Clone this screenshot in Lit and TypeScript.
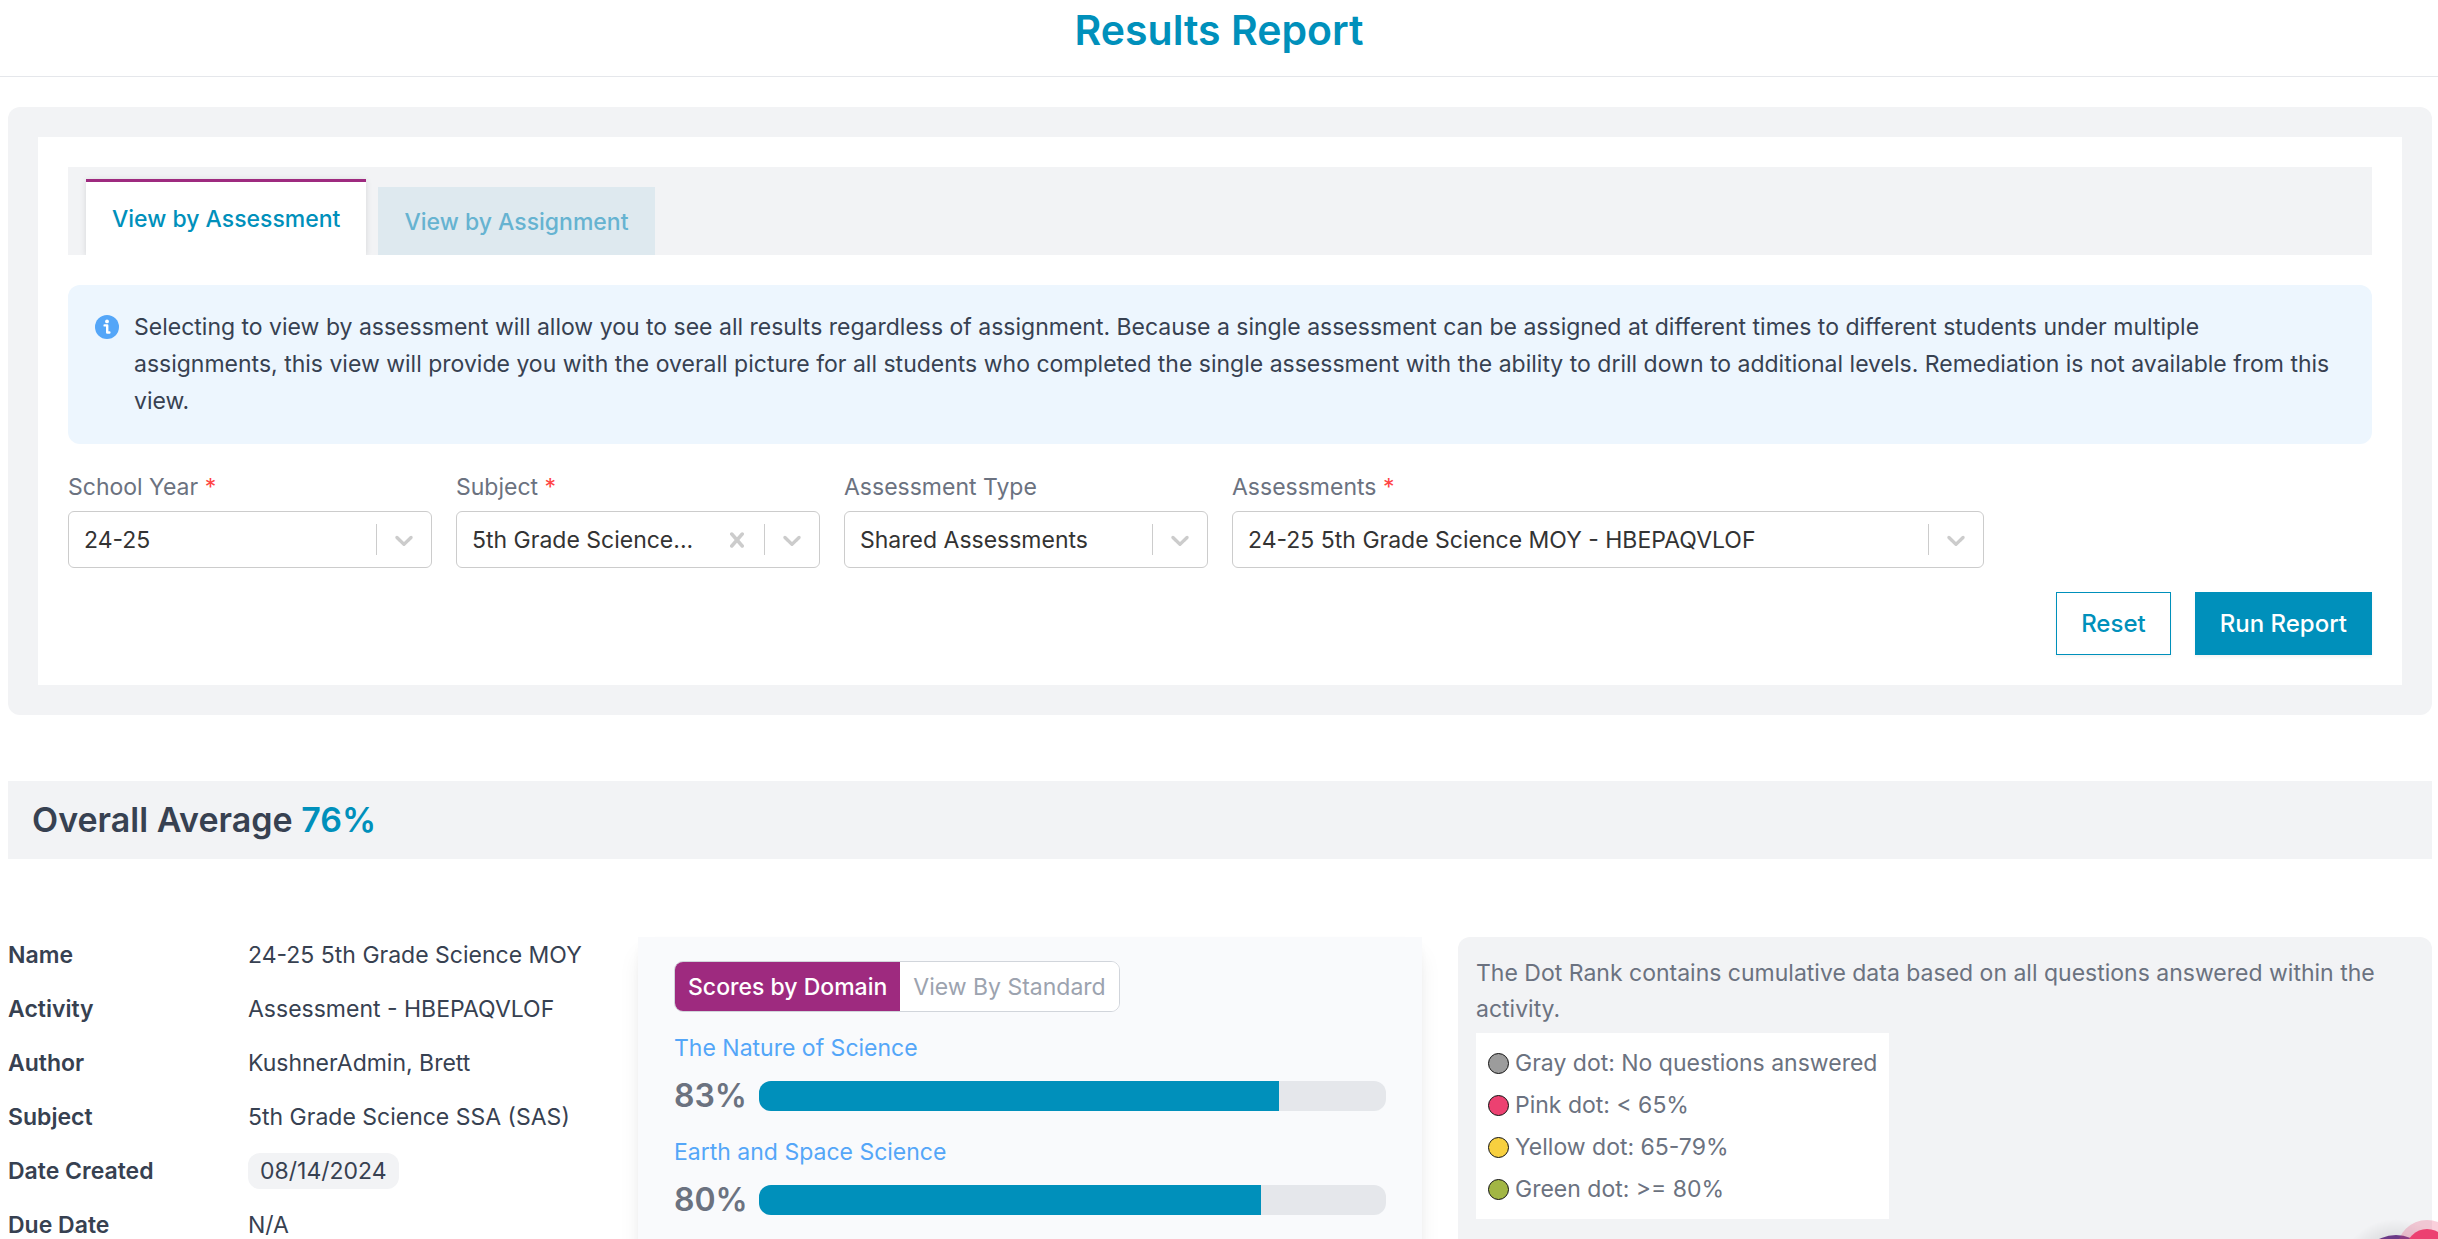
import { LitElement, html, css, svg, nothing } from "lit";
import { customElement, property, state } from "lit/decorators.js";
import { classMap } from "lit/directives/class-map.js";
import { styleMap } from "lit/directives/style-map.js";

const chevron = svg`<svg class="icon" viewBox="0 0 20 20" aria-hidden="true"><path d="M4.516 7.548c0.436-0.446 1.043-0.481 1.576 0l3.908 3.747 3.908-3.747c0.533-0.481 1.141-0.446 1.574 0 0.436 0.445 0.408 1.197 0 1.615-0.406 0.418-4.695 4.502-4.695 4.502-0.217 0.223-0.502 0.335-0.787 0.335s-0.57-0.112-0.789-0.335c0 0-4.287-4.084-4.695-4.502s-0.436-1.17 0-1.615z"/></svg>`;

const cross = svg`<svg class="icon" viewBox="0 0 20 20" aria-hidden="true"><path d="M14.348 14.849c-0.469 0.469-1.229 0.469-1.697 0l-2.651-3.030-2.651 3.029c-0.469 0.469-1.229 0.469-1.697 0-0.469-0.469-0.469-1.229 0-1.697l2.758-3.15-2.759-3.152c-0.469-0.469-0.469-1.228 0-1.697s1.228-0.469 1.697 0l2.652 3.031 2.651-3.031c0.469-0.469 1.228-0.469 1.697 0s0.469 1.229 0 1.697l-2.758 3.152 2.758 3.15c0.469 0.469 0.469 1.229 0 1.698z"/></svg>`;

@customElement("select-field")
export class SelectField extends LitElement {
  static styles = css`
    :host { display: block; min-width: 0; }
    .label { display: block; line-height: 38px; margin-bottom: 5px; color: #6b7280; }
    .required { color: #ff4444; }
    .control {
      display: grid;
      grid-template-columns: minmax(0, 1fr) auto;
      align-items: center;
      height: 57px;
      box-sizing: border-box;
      border: 1px solid #cccccc;
      border-radius: 6px;
      background: #ffffff;
    }
    .select {
      grid-area: 1 / 1 / 2 / 3;
      width: 100%;
      height: 100%;
      padding: 0 72px 0 15px;
      border: 0;
      background: transparent;
      appearance: none;
      font: inherit;
      color: #333333;
      border-radius: 6px;
    }
    .indicators {
      grid-area: 1 / 2;
      display: flex;
      align-items: center;
      color: #cccccc;
      pointer-events: none;
    }
    .clear {
      display: flex;
      padding: 12px;
      border: 0;
      background: none;
      color: inherit;
      pointer-events: auto;
    }
    .separator { width: 1px; height: 31px; background: #cccccc; }
    .arrow { display: flex; padding: 12px; }
    .icon { width: 30px; height: 30px; fill: currentColor; }
  `;

  @property() label = "";
  @property() value = "";
  @property({ type: Boolean }) required = false;
  @property({ type: Boolean }) clearable = false;

  render() {
    return html`
      <label class="label" for="control"
        >${this.label}${this.required ? html` <span class="required">*</span>` : nothing}</label
      >
      <div class="control">
        <select class="select" id="control" ?required=${this.required}>
          <option selected>${this.value}</option>
        </select>
        <div class="indicators">
          ${this.clearable
            ? html`<button class="clear" type="button" aria-label="Clear">${cross}</button>`
            : nothing}
          <span class="separator"></span>
          <span class="arrow">${chevron}</span>
        </div>
      </div>
    `;
  }
}

interface Domain { name: string; score: number; }

@customElement("app-root")
export class AppRoot extends LitElement {
  static styles = css`
    :host {
      --accent: #0090bb;
      --plum: #9e2a7f;
      --ink: #374151;
      --muted: #6b7280;
      --surface: #f2f3f5;
      display: flex;
      flex-direction: column;
      height: 100vh;
      overflow: hidden;
      background: #ffffff;
      color: var(--ink);
      font-family: Inter, "Liberation Sans", sans-serif;
      font-size: 23px;
      line-height: 36px;
    }
    button { font: inherit; cursor: pointer; }
    .header {
      flex: none;
      padding: 0 8px 16px;
      border-bottom: 1px solid #e5e7eb;
      text-align: center;
    }
    .title {
      margin: 0;
      color: var(--accent);
      font-size: 41px;
      font-weight: 600;
      line-height: 60px;
    }
    .page {
      flex: 1;
      min-height: 0;
      display: flex;
      flex-direction: column;
      padding: 30px 6px 0 8px;
    }
    .panel { flex: none; padding: 30px; border-radius: 12px; background: var(--surface); }
    .card { padding: 30px; background: #ffffff; }
    .tabs {
      display: flex;
      align-items: flex-end;
      gap: 12px;
      height: 88px;
      box-sizing: border-box;
      padding: 0 18px;
      background: var(--surface);
    }
    .tab {
      height: 68px;
      padding: 2px 26px 0;
      border: 0;
      background: #dee9ef;
      color: #66b3d1;
      font-weight: 500;
    }
    .tab.active {
      height: 76px;
      padding-top: 0;
      border-top: 3px solid var(--plum);
      background: #ffffff;
      color: var(--accent);
      box-shadow: 0 1px 6px rgba(0, 0, 0, 0.12);
      clip-path: inset(-8px -8px 0 -8px);
    }
    .notice {
      display: flex;
      align-items: flex-start;
      gap: 15px;
      margin: 30px 0 24px;
      padding: 24px 27px;
      border-radius: 12px;
      background: #edf6fe;
    }
    .notice-icon { flex: none; width: 24px; height: 24px; margin-top: 6px; }
    .notice-text { margin: 0; line-height: 37px; }
    .filters { display: grid; grid-template-columns: repeat(6, minmax(0, 1fr)); gap: 24px; }
    .wide { grid-column: span 2; }
    .actions { display: flex; justify-content: flex-end; gap: 24px; margin-top: 24px; }
    .button {
      height: 63px;
      padding: 0 24px;
      border: 1px solid var(--accent);
      background: #ffffff;
      color: var(--accent);
      font-size: 24px;
      font-weight: 500;
      box-shadow: 0 2px 3px rgba(0, 0, 0, 0.05);
    }
    .button.primary { background: var(--accent); color: #ffffff; }
    .average {
      flex: none;
      margin: 66px 0 78px;
      padding: 0 24px;
      background: var(--surface);
      font-size: 34px;
      font-weight: 600;
      line-height: 78px;
    }
    .average-value { color: var(--accent); }
    .report {
      flex: 1;
      min-height: 0;
      display: grid;
      grid-template-columns: 297fr 392fr 487fr;
      gap: 36px;
    }
    .details {
      display: grid;
      grid-template-columns: 240px minmax(0, 1fr);
      align-content: start;
      row-gap: 18px;
      margin: 0;
    }
    .term { font-weight: 600; }
    .value { margin: 0; }
    .badge { display: inline-block; padding: 0 12px; border-radius: 12px; background: var(--surface); }
    .scores {
      padding: 24px 36px;
      background: #f9fafc;
      box-shadow: 0 15px 23px -5px rgba(0, 0, 0, 0.1), 0 6px 9px -3px rgba(0, 0, 0, 0.05);
    }
    .toggle {
      display: inline-flex;
      vertical-align: top;
      overflow: hidden;
      border: 1px solid #d1d5db;
      border-radius: 9px;
      background: #ffffff;
    }
    .option { height: 49px; padding: 0 13px; border: 0; background: #ffffff; color: #9ca3af; }
    .option.active { background: var(--plum); color: #ffffff; font-weight: 500; }
    .domains { display: grid; gap: 8px; margin: 18px 0 0; padding: 0; list-style: none; }
    .domain-link { color: #54a6f8; text-decoration: none; }
    .meter { display: flex; align-items: center; gap: 12px; height: 60px; }
    .score {
      width: 73px;
      color: var(--muted);
      font-size: 32px;
      font-weight: 600;
    }
    .track { flex: 1; height: 30px; overflow: hidden; border-radius: 12px; background: #e5e7eb; }
    .fill { height: 100%; background: var(--accent); }
    .rank { padding: 18px; border-radius: 12px; background: var(--surface); color: var(--muted); }
    .rank-text { margin: 0; }
    .legend {
      display: inline-block;
      margin: 6px 0 0;
      padding: 9px 12px;
      background: #ffffff;
      list-style: none;
    }
    .legend-row { display: flex; align-items: center; gap: 6px; height: 42px; }
    .dot {
      width: 21px;
      height: 21px;
      box-sizing: border-box;
      border: 1px solid #111111;
      border-radius: 50%;
    }
    .dot.gray { background: #9c9c9c; }
    .dot.pink { background: #ec4171; }
    .dot.yellow { background: #f8d03f; }
    .dot.green { background: #a2b644; }
    .chat {
      position: fixed;
      right: 0;
      bottom: 0;
      width: 98px;
      height: 39px;
      padding: 0;
      border: 0;
      background: none;
    }
    .chat-art { display: block; width: 98px; height: 39px; }
  `;

  @state() private view = "View by Assessment";
  @state() private grouping = "Scores by Domain";

  private domains: Domain[] = [
    { name: "The Nature of Science", score: 83 },
    { name: "Earth and Space Science", score: 80 },
  ];

  private details: [string, string][] = [
    ["Name", "24-25 5th Grade Science MOY"],
    ["Activity", "Assessment - HBEPAQVLOF"],
    ["Author", "KushnerAdmin, Brett"],
    ["Subject", "5th Grade Science SSA (SAS)"],
    ["Date Created", "08/14/2024"],
    ["Due Date", "N/A"],
  ];

  private legend: [string, string][] = [
    ["gray", "Gray dot: No questions answered"],
    ["pink", "Pink dot: < 65%"],
    ["yellow", "Yellow dot: 65-79%"],
    ["green", "Green dot: >= 80%"],
  ];

  render() {
    return html`
      <header class="header"><h1 class="title">Results Report</h1></header>
      <main class="page">
        <section class="panel">
          <div class="card">
            <div class="tabs" role="tablist">
              ${["View by Assessment", "View by Assignment"].map(
                (name) => html`<button
                  type="button"
                  role="tab"
                  aria-selected=${this.view === name}
                  class=${classMap({ tab: true, active: this.view === name })}
                  @click=${() => (this.view = name)}
                >${name}</button>`
              )}
            </div>
            <div class="notice">
              <svg class="notice-icon" viewBox="0 0 24 24" aria-hidden="true">
                <circle cx="12" cy="12" r="12" fill="#54a6f8" />
                <circle cx="12" cy="6.4" r="1.9" fill="#fff" />
                <path d="M9.6 10.4h2.6v7.1h2.2" fill="none" stroke="#fff" stroke-width="2.4" stroke-linejoin="round" stroke-linecap="round" />
              </svg>
              <p class="notice-text">
                Selecting to view by assessment will allow you to see all results regardless of
                assignment. Because a single assessment can be assigned at different times to
                different students under multiple assignments, this view will provide you with the
                overall picture for all students who completed the single assessment with the
                ability to drill down to additional levels. Remediation is not available from this
                view.
              </p>
            </div>
            <form @submit=${(e: Event) => e.preventDefault()}>
              <div class="filters">
                <select-field label="School Year" value="24-25" required></select-field>
                <select-field label="Subject" value="5th Grade Science..." required clearable></select-field>
                <select-field label="Assessment Type" value="Shared Assessments"></select-field>
                <select-field class="wide" label="Assessments" value="24-25 5th Grade Science MOY - HBEPAQVLOF" required></select-field>
              </div>
              <div class="actions">
                <button class="button" type="reset">Reset</button>
                <button class="button primary" type="submit">Run Report</button>
              </div>
            </form>
          </div>
        </section>

        <h2 class="average">Overall Average <span class="average-value">76%</span></h2>

        <div class="report">
          <dl class="details">
            ${this.details.map(
              ([term, value]) => html`
                <dt class="term">${term}</dt>
                <dd class="value">
                  ${term === "Date Created" ? html`<span class="badge">${value}</span>` : value}
                </dd>
              `
            )}
          </dl>
          <section class="scores">
            <div class="toggle">
              ${["Scores by Domain", "View By Standard"].map(
                (name) => html`<button
                  type="button"
                  aria-pressed=${this.grouping === name}
                  class=${classMap({ option: true, active: this.grouping === name })}
                  @click=${() => (this.grouping = name)}
                >${name}</button>`
              )}
            </div>
            <ul class="domains">
              ${this.domains.map(
                (d) => html`<li>
                  <a class="domain-link" href="#">${d.name}</a>
                  <div class="meter">
                    <span class="score">${d.score}%</span>
                    <div class="track">
                      <div class="fill" style=${styleMap({ width: `${d.score}%` })}></div>
                    </div>
                  </div>
                </li>`
              )}
            </ul>
          </section>
          <section class="rank">
            <p class="rank-text">
              The Dot Rank contains cumulative data based on all questions answered within the
              activity.
            </p>
            <ul class="legend">
              ${this.legend.map(
                ([tone, text]) => html`<li class="legend-row">
                  <span class="dot ${tone}"></span>${text}
                </li>`
              )}
            </ul>
          </section>
        </div>
      </main>
      <button class="chat" type="button" aria-label="Open help">
        <svg class="chat-art" viewBox="0 0 98 39" aria-hidden="true">
          <defs>
            <radialGradient id="glow">
              <stop offset="0.6" stop-color="#000" stop-opacity="0.1" />
              <stop offset="1" stop-color="#000" stop-opacity="0" />
            </radialGradient>
          </defs>
          <circle cx="56" cy="77" r="58" fill="url(#glow)" />
          <circle cx="56" cy="73" r="38" fill="#6b3a87" />
          <circle cx="87" cy="50" r="30" fill="#ec4171" opacity="0.25" />
          <circle cx="87" cy="50" r="21" fill="#ec4171" />
        </svg>
      </button>
    `;
  }
}
